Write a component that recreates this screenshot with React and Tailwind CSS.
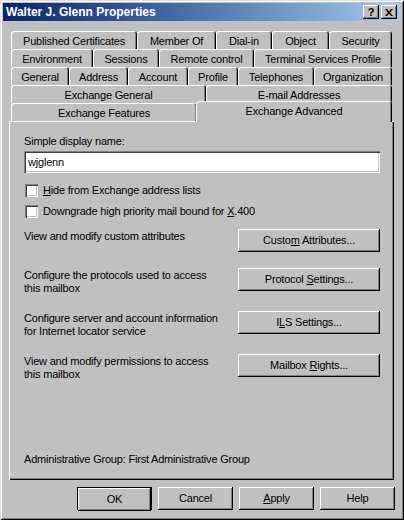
import React from "react";

const raised =
  "shadow-[inset_-1px_-1px_0_#000,inset_1px_1px_0_#fff,inset_-2px_-2px_0_#808080]";
const sunken =
  "shadow-[inset_1px_1px_0_#808080,inset_2px_2px_0_#404040,inset_-1px_-1px_0_#fff,inset_-2px_-2px_0_#c0c0c0]";
const tabEdge =
  "shadow-[inset_1px_1px_0_#fff,inset_-1px_0_0_#000,inset_-2px_0_0_#808080]";

const Tab = ({ className, children }) => (
  <div
    className={`h-[18px] rounded-t-[3px] flex items-center justify-center pt-[2px] shrink-0 ${tabEdge} ${className}`}
  >
    {children}
  </div>
);

const Button = ({ children, className = "" }) => (
  <div
    className={`h-[23px] flex items-center justify-center bg-[#c0c0c0] ${raised} ${className}`}
  >
    {children}
  </div>
);

const Checkbox = ({ children }) => (
  <div className="flex items-center h-[13px] gap-[5px]">
    <div className={`w-[13px] h-[13px] bg-white ${sunken}`}></div>
    <span>{children}</span>
  </div>
);

const ActionRow = ({ lines, children, className }) => (
  <div className={`flex justify-between items-start ${className}`}>
    <div className="leading-[13px] pt-[1px]">
      {lines.map((l) => (
        <div key={l}>{l}</div>
      ))}
    </div>
    <Button className="w-[142px]">{children}</Button>
  </div>
);

export default function App() {
  return (
    <div
      className="w-[404px] h-[520px] bg-[#c0c0c0] text-black text-[11px] tracking-[-0.2px] flex flex-col shadow-[inset_1px_1px_0_#dfdfdf,inset_-1px_-1px_0_#000,inset_2px_2px_0_#fff,inset_-2px_-2px_0_#808080]"
      style={{ fontFamily: '"Liberation Sans", Arial, sans-serif' }}
    >
      {/* title bar */}
      <div className="mx-[3px] mt-[3px] h-[18px] flex items-center justify-between bg-gradient-to-r from-[#0a246a] to-[#a6caf0] pl-[3px] pr-[4px]">
        <span className="text-white font-bold text-[12px] tracking-normal">
          Walter J. Glenn Properties
        </span>
        <div className="flex gap-[2px]">
          <div
            className={`w-[16px] h-[14px] bg-[#c0c0c0] flex items-center justify-center font-bold text-[11px] leading-none pt-[1px] ${raised}`}
          >
            ?
          </div>
          <div
            className={`w-[16px] h-[14px] bg-[#c0c0c0] flex items-center justify-center ${raised}`}
          >
            <svg width="8" height="7" viewBox="0 0 8 7">
              <path d="M0 0h2l2 2.5L6 0h2L5 3.5 8 7H6L4 4.5 2 7H0l3-3.5z" fill="#000" />
            </svg>
          </div>
        </div>
      </div>

      {/* tabs */}
      <div className="mt-[10px] ml-[11px] w-[381px] flex flex-col">
        <div className="flex">
          <Tab className="w-[126px]">Published Certificates</Tab>
          <Tab className="w-[79px]">Member Of</Tab>
          <Tab className="w-[56px]">Dial-in</Tab>
          <Tab className="w-[57px]">Object</Tab>
          <Tab className="w-[63px]">Security</Tab>
        </div>
        <div className="flex">
          <Tab className="w-[82px]">Environment</Tab>
          <Tab className="w-[66px]">Sessions</Tab>
          <Tab className="w-[95px]">Remote control</Tab>
          <Tab className="w-[138px]">Terminal Services Profile</Tab>
        </div>
        <div className="flex">
          <Tab className="w-[58px]">General</Tab>
          <Tab className="w-[59px]">Address</Tab>
          <Tab className="w-[60px]">Account</Tab>
          <Tab className="w-[50px]">Profile</Tab>
          <Tab className="w-[76px]">Telephones</Tab>
          <Tab className="w-[78px]">Organization</Tab>
        </div>
        <div className="flex">
          <Tab className="w-[195px]">Exchange General</Tab>
          <Tab className="w-[186px]">E-mail Addresses</Tab>
        </div>
        <div className="flex h-[18px] items-start">
          <Tab className="w-[186px]">Exchange Features</Tab>
          <div
            className={`-ml-[1px] -mt-[2px] w-[198px] h-[21px] rounded-t-[3px] bg-[#c0c0c0] relative z-10 flex justify-center pt-[2px] ${tabEdge}`}
          >
            Exchange Advanced
          </div>
        </div>
      </div>

      {/* panel */}
      <div className="ml-[9px] w-[385px] h-[359px] flex flex-col pl-[15px] pr-[14px] pt-[14px] pb-[14px] shadow-[inset_1px_1px_0_#fff,inset_-1px_-1px_0_#000,inset_-2px_-2px_0_#808080]">
        <div className="leading-[13px]">Simple display name:</div>
        <div
          className={`mt-[3px] h-[22px] bg-white flex items-center pl-[4px] ${sunken}`}
        >
          wjglenn
        </div>
        <div className="mt-[11px] pl-[1px]">
          <Checkbox>
            <u>H</u>ide from Exchange address lists
          </Checkbox>
        </div>
        <div className="mt-[8px] pl-[1px]">
          <Checkbox>
            Downgrade high priority mail bound for <u>X</u>.400
          </Checkbox>
        </div>
        <ActionRow className="mt-[11px]" lines={["View and modify custom attributes"]}>
          <span>
            Custo<u>m</u> Attributes...
          </span>
        </ActionRow>
        <ActionRow
          className="mt-[16px]"
          lines={["Configure the protocols used to access", "this mailbox"]}
        >
          <span>
            Protocol <u>S</u>ettings...
          </span>
        </ActionRow>
        <ActionRow
          className="mt-[16px]"
          lines={["Configure server and account information", "for Internet locator service"]}
        >
          <span>
            I<u>L</u>S Settings...
          </span>
        </ActionRow>
        <ActionRow
          className="mt-[16px]"
          lines={["View and modify permissions to access", "this mailbox"]}
        >
          <span>
            Mailbox <u>R</u>ights...
          </span>
        </ActionRow>
        <div className="mt-auto leading-[13px]">
          Administrative Group: First Administrative Group
        </div>
      </div>

      {/* dialog buttons */}
      <div className="mt-[7px] flex justify-end gap-[6px] pr-[9px]">
        <div className="w-[75px] h-[23px] border border-black">
          <Button className="h-[21px]">OK</Button>
        </div>
        <Button className="w-[75px]">Cancel</Button>
        <Button className="w-[75px]">
          <span>
            <u>A</u>pply
          </span>
        </Button>
        <Button className="w-[75px]">Help</Button>
      </div>
    </div>
  );
}
